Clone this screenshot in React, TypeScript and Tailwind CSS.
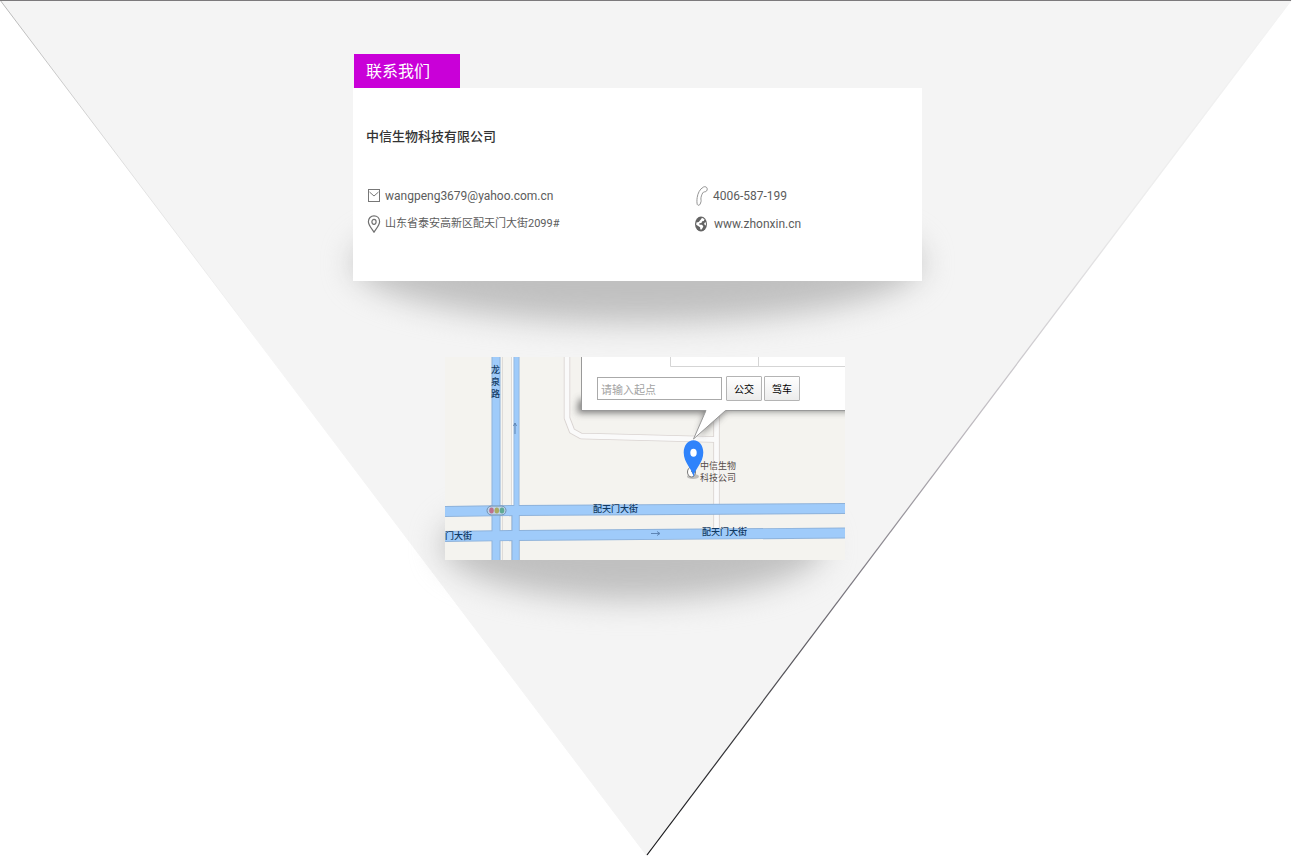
import React from "react";

function Backdrop() {
  return (
    <svg
      className="absolute inset-0 -z-20 h-full w-full"
      viewBox="0 0 1292 856"
      preserveAspectRatio="none"
      aria-hidden="true"
    >
      <defs>
        <linearGradient id="edge" x1="1292" y1="0" x2="647" y2="856" gradientUnits="userSpaceOnUse">
          <stop offset="0" stopColor="#f4f4f4" />
          <stop offset="0.25" stopColor="#ececec" />
          <stop offset="0.5" stopColor="#bcb8be" />
          <stop offset="0.7" stopColor="#75727a" />
          <stop offset="0.85" stopColor="#3a3a3e" />
          <stop offset="1" stopColor="#111114" />
        </linearGradient>
        <linearGradient id="edgeLeft" x1="0" y1="0" x2="647" y2="856" gradientUnits="userSpaceOnUse">
          <stop offset="0" stopColor="#b8b8b8" />
          <stop offset="0.2" stopColor="#e0e0e0" />
          <stop offset="0.4" stopColor="#f4f4f4" />
        </linearGradient>
      </defs>
      <path d="M0 0H1292L647 856Z" fill="#f4f4f4" />
      <path d="M0 0L647 856" stroke="url(#edgeLeft)" fill="none" />
      <path d="M1291 0L647 855" stroke="url(#edge)" strokeWidth="1.2" fill="none" />
      <path d="M0 0.5H1291" stroke="#7c7a7c" />
    </svg>
  );
}

function MailIcon() {
  return (
    <svg className="h-[14px] w-[14px] shrink-0" viewBox="0 0 14 14" fill="none" stroke="#777" aria-hidden="true">
      <rect x="1.5" y="0.5" width="11" height="12" />
      <path d="M2.500 3L7 7L11.500 3" />
    </svg>
  );
}

function PlaceIcon() {
  return (
    <svg className="h-[18px] w-[14px] shrink-0" viewBox="0 0 14 18" fill="none" stroke="#707070" strokeWidth="1.2" aria-hidden="true">
      <path d="M7 17.200C5 14 1.400 10 1.400 6.700C1.400 3.300 3.800 .8 7 .8S12.600 3.300 12.600 6.700C12.600 10 9 14 7 17.200Z" />
      <ellipse cx="7" cy="6.800" rx="2.100" ry="2.500" />
    </svg>
  );
}

function PhoneIcon() {
  return (
    <svg className="h-[20px] w-[12px] shrink-0" viewBox="0 0 12 20" fill="none" stroke="#888" strokeWidth=".9" aria-hidden="true">
      <path d="M7.500 1C9 .2 11 1 11.200 2.700C11.400 4.500 10.300 5.800 8.700 5.800C7.800 5.800 7.200 6.200 6.700 7C5.700 8.700 4.900 11 4.900 13C4.900 14.300 5.400 14.600 5 15.700L4.200 18C3.800 19.300 1.800 19.800 1.300 18.500C.8 17 .8 14 1.200 11.500C1.800 7.500 3.600 3 7.500 1Z" />
    </svg>
  );
}

function GlobeIcon() {
  return (
    <svg className="h-[16px] w-[12px] shrink-0" viewBox="0 0 12 16" aria-hidden="true">
      <ellipse cx="6" cy="8" rx="6" ry="7.500" fill="#636363" />
      <path d="M7 1.800L9.500 3.200L8.800 5L7.200 5.300L6.400 7L4.300 7.300L4.500 8.800L7 8.700L8.300 10.200L7.600 12L6.300 13.700L5.300 13.200L5.100 11.300L3.200 10L1.200 8.800L1.400 6.500L3.700 6L5.800 3.500Z" fill="#fff" />
      <path d="M10.400 6L11 7.500L10.800 9.500L9.500 8.700L9.200 7.200Z" fill="#fff" />
    </svg>
  );
}

function ContactCard() {
  return (
    <section className="relative mr-[17px] w-full max-w-[569px]">
      <h1 className="ml-px h-[34px] w-[106px] bg-[#c900d8] pl-3 text-base leading-8 text-white">联系我们</h1>
      <div className="relative">
        <div className="absolute -bottom-[42px] left-0 -z-10 h-[120px] w-full rounded-[50%] bg-[#c0c0c0] blur-[15px]" />
        <div className="bg-white pb-[43px] pl-[13px] pt-[37px]">
          <h2 className="text-[13px] font-medium leading-[22px] text-[#333]">中信生物科技有限公司</h2>
          <address className="mt-[35px] grid grid-cols-[328px_1fr] items-center font-[Roboto,'Noto_Sans_CJK_SC',sans-serif] text-xs not-italic leading-7 text-[#5c5c5c]">
            <a href="mailto:wangpeng3679@yahoo.com.cn" className="flex items-center gap-1 pl-px">
              <MailIcon />
              <span>wangpeng3679@yahoo.com.cn</span>
            </a>
            <a href="tel:4006587199" className="flex items-center gap-[5px] pl-0.5">
              <PhoneIcon />
              <span>4006-587-199</span>
            </a>
            <p className="flex items-center gap-1 pl-px text-[11px] leading-7">
              <PlaceIcon />
              <span>山东省泰安高新区配天门大街2099#</span>
            </p>
            <a href="http://www.zhonxin.cn" className="flex items-center gap-[7px] pl-px">
              <GlobeIcon />
              <span>www.zhonxin.cn</span>
            </a>
          </address>
        </div>
      </div>
    </section>
  );
}

function MapDrawing() {
  return (
    <svg className="block h-auto w-full" viewBox="0 0 400 203" role="img" aria-label="地图">
      <defs>
        <filter id="soft" x="-20%" y="-50%" width="140%" height="220%">
          <feGaussianBlur stdDeviation="3.500" />
        </filter>
        <clipPath id="frame">
          <rect width="400" height="203" />
        </clipPath>
      </defs>
      <g clipPath="url(#frame)">
        <rect width="400" height="203" fill="#f4f3ef" />
        <g fill="none" strokeLinejoin="round">
          <path d="M122 0V61L127 74L136 79L271 82.500M271.500 50V172" stroke="#d9d3d1" strokeWidth="6.500" />
          <path d="M122 0V61L127 74L136 79L271 82.500M271.500 50V172" stroke="#fafafa" strokeWidth="4.800" />
        </g>
        <path d="M57.500 0V203M66.500 0V203" stroke="#dedbd8" fill="none" />
        <path d="M67 0H69V203H67Z" fill="#fafafa" />
        <g fill="none" stroke="#8eb2da">
          <path d="M51 0V203" strokeWidth="9" />
          <path d="M71.500 0V203" strokeWidth="6" />
          <path d="M70.500 150V203" strokeWidth="8" />
          <path d="M0 154.500L72 153.500L400 151.500" strokeWidth="11" />
          <path d="M0 179.500L72 178.500L400 176" strokeWidth="11" />
        </g>
        <g fill="none" stroke="#9fcbfa">
          <path d="M51 0V203" strokeWidth="7" />
          <path d="M71.500 0V203" strokeWidth="4.400" />
          <path d="M70.500 150V203" strokeWidth="6" />
          <path d="M0 154.500L72 153.500L400 151.500" strokeWidth="9.200" />
          <path d="M0 179.500L72 178.500L400 176" strokeWidth="9.200" />
        </g>
        <g stroke="#5f86b5" fill="none">
          <path d="M70 77V66L68.500 69M70 66L71.500 69" />
          <path d="M206 176.500H215L212 174.500M215 176.500L212 178.500" />
        </g>
        <rect x="42" y="149" width="19" height="9" rx="4.500" fill="#bdd3e8" stroke="#6f8fb0" />
        <ellipse cx="46.500" cy="153.500" rx="2.300" ry="2.900" fill="#bd708e" />
        <ellipse cx="51.800" cy="153.500" rx="2.300" ry="2.900" fill="#a9ab62" />
        <ellipse cx="57" cy="153.500" rx="2.300" ry="2.900" fill="#5fa992" />
        <g fill="#123a63" fontSize="9" fontWeight="500">
          <text x="46" y="16">龙</text>
          <text x="46" y="28">泉</text>
          <text x="46" y="40">路</text>
          <text x="148" y="155">配天门大街</text>
          <text x="257" y="178">配天门大街</text>
          <text x="0" y="182">门大街</text>
        </g>
        <path d="M134 42H410V54H281L254 79L260 56H132Z" fill="#555" opacity=".75" filter="url(#soft)" />
        <path d="M136.500 -1V53.500H261L248.500 82L280.500 53.500H401V-1Z" fill="#fff" stroke="#999" />
        <path d="M225.500 0V9.500H400M313.500 0V9.500" stroke="#d5d5d5" fill="none" />
        <ellipse cx="248" cy="119.500" rx="6" ry="2.500" fill="#888" opacity=".5" />
        <ellipse cx="246.500" cy="115" rx="4" ry="5" fill="#fff" stroke="#777" />
        <path d="M246 114L248 112V117Z" fill="#555" />
        <path d="M248.500 120C247.500 112 238.700 106 238.700 95.500C238.700 88.500 242.800 83.200 248.500 83.200S258.300 88.500 258.300 95.500C258.300 106 249.500 112 248.500 120Z" fill="#2f83fb" />
        <ellipse cx="248.500" cy="95.700" rx="3.200" ry="4" fill="#fff" />
        <g fill="#554b49" fontSize="9">
          <text x="255" y="112">中信生物</text>
          <text x="255" y="124">科技公司</text>
        </g>
      </g>
    </svg>
  );
}

function MapPanel() {
  const button =
    "h-[25px] w-[36px] rounded-[1px] border border-[#b4b4b4] bg-linear-to-b from-white to-[#ececec] text-[10px] text-black";
  return (
    <section className="relative mr-0.5 mt-[76px] w-full max-w-[400px]">
      <div className="absolute -bottom-10 -left-1 -z-10 h-[110px] w-[384px] rounded-[50%] bg-[#c0c0c0] blur-[15px]" />
      <MapDrawing />
      <form className="absolute left-[152px] top-[19px] flex items-center" onSubmit={(e) => e.preventDefault()}>
        <input
          type="text"
          aria-label="起点"
          placeholder="请输入起点"
          className="mr-1 h-[23px] w-[125px] border border-[#aaa] bg-white px-[3px] text-[11px] placeholder:text-[#a3a3a3]"
        />
        <button type="submit" className={button + " mr-0.5"}>公交</button>
        <button type="submit" className={button}>驾车</button>
      </form>
    </section>
  );
}

export default function App() {
  return (
    <main className="relative isolate flex min-h-screen flex-col items-center overflow-hidden bg-white pt-[54px] font-['Noto_Sans_CJK_SC',sans-serif]">
      <Backdrop />
      <ContactCard />
      <MapPanel />
    </main>
  );
}
